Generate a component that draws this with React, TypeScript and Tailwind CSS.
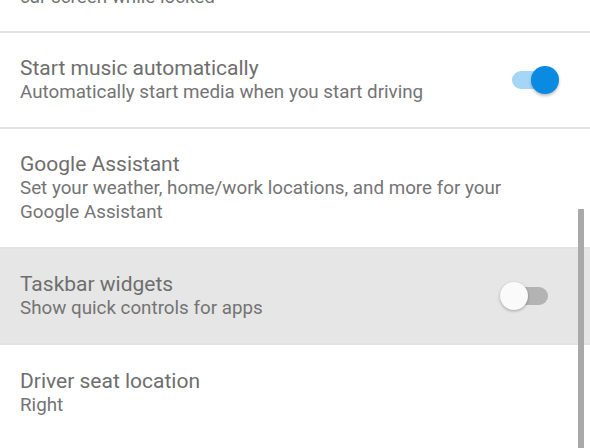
import React from 'react';

type RowProps = {
  title: string;
  lines: string[];
  height: string;
  toggle?: 'on' | 'off';
  highlight?: boolean;
};

function Toggle({ on }: { on: boolean }) {
  return (
    <div className="relative w-[36px] h-[18px] mr-[42px]">
      <div className={`absolute inset-0 rounded-full ${on ? 'bg-[#a6d6f6]' : 'bg-[#b3b3b3]'}`} />
      <div
        className={`absolute top-1/2 -translate-y-1/2 w-[28px] h-[28px] rounded-full ${
          on
            ? 'left-[19px] bg-[#0a8ae0] shadow-[0_2px_3px_rgba(0,0,0,0.25)]'
            : 'left-[-12px] bg-[#fafafa] shadow-[0_1px_3px_rgba(0,0,0,0.3)]'
        }`}
      />
    </div>
  );
}

function Row({ title, lines, height, toggle, highlight }: RowProps) {
  return (
    <div
      className={`flex items-center justify-between border-b-2 border-[#e3e3e3] pl-[20px] ${height} ${
        highlight ? 'bg-[#e6e6e6]' : 'bg-white'
      }`}
    >
      <div className="flex flex-col">
        <p className="text-[21px] leading-[24px] text-[#6e6e6e]">{title}</p>
        {lines.map((l) => (
          <p key={l} className="text-[18.8px] leading-[24px] text-[#747474]">
            {l}
          </p>
        ))}
      </div>
      {toggle && <Toggle on={toggle === 'on'} />}
    </div>
  );
}

export default function App() {
  return (
    <div
      className="relative w-[590px] h-[448px] overflow-hidden bg-white"
      style={{ fontFamily: 'Roboto, "Liberation Sans", sans-serif' }}
    >
      {/* cut off row at the top */}
      <div className="h-[33px] overflow-hidden border-b-2 border-[#e3e3e3] pl-[20px]">
        <p className="-mt-[15px] text-[18.8px] leading-[24px] text-[#747474]">car screen while locked</p>
      </div>
      <Row
        title="Start music automatically"
        lines={['Automatically start media when you start driving']}
        height="h-[96px]"
        toggle="on"
      />
      <Row
        title="Google Assistant"
        lines={['Set your weather, home/work locations, and more for your', 'Google Assistant']}
        height="h-[120px]"
      />
      <Row
        title="Taskbar widgets"
        lines={['Show quick controls for apps']}
        height="h-[96px]"
        toggle="off"
        highlight
      />
      <div className="flex h-[120px] flex-col pl-[20px] pt-[24px]">
        <p className="text-[21px] leading-[24px] text-[#6e6e6e]">Driver seat location</p>
        <p className="text-[18.8px] leading-[24px] text-[#747474]">Right</p>
      </div>

      {/* scrollbar */}
      <div className="absolute left-[578px] top-[209px] w-[6px] h-[260px] bg-[#a9a9a9]" />
    </div>
  );
}
